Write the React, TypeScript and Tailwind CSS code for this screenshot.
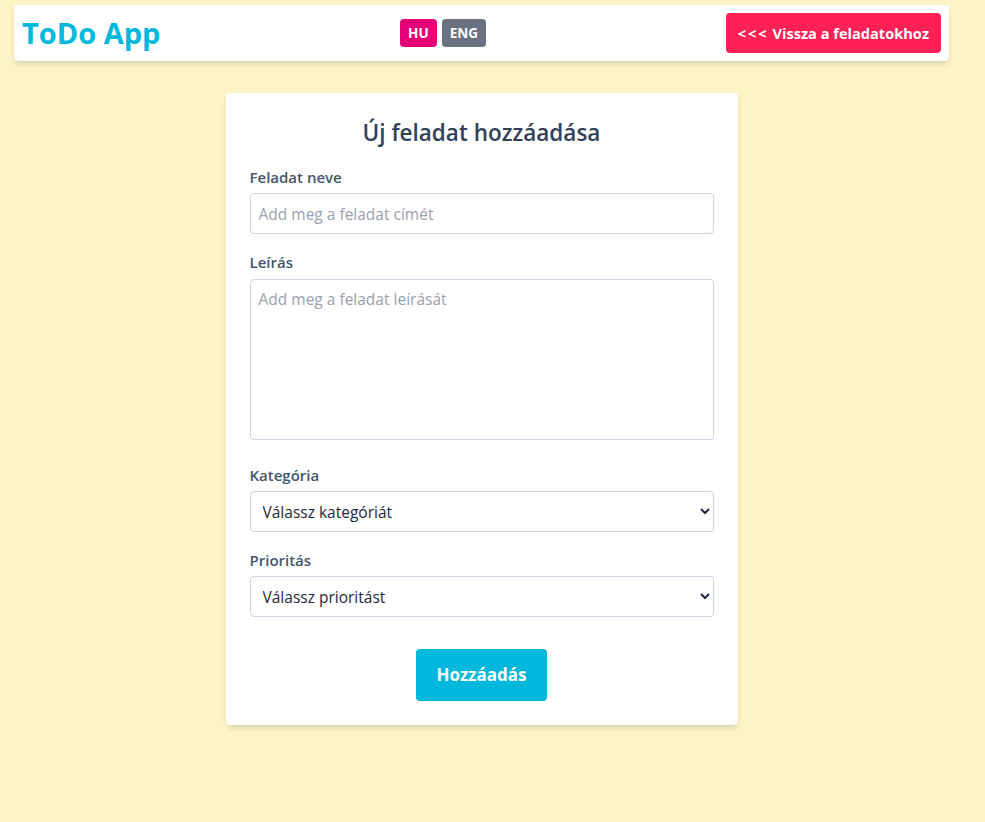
import { useState } from 'react';

export default function App() {
  const [title, setTitle] = useState('');
  const [description, setDescription] = useState('');
  const [category, setCategory] = useState('');
  const [priority, setPriority] = useState('');
  const [lang, setLang] = useState('hu');

  return (
    <div
      className="min-h-screen bg-amber-100 pt-[5px] pr-[22px]"
      style={{ fontFamily: '"Open Sans", "Noto Sans", sans-serif' }}
      data-lang={lang}
    >
      {/* header */}
      <div className="mx-3.5 flex items-center justify-between rounded bg-white px-2 py-2 shadow-md">
        <h1 className="text-[29px] leading-9 font-bold text-cyan-500">ToDo App</h1>
        <div className="flex gap-[5px]">
          <button
            onClick={() => setLang('hu')}
            className="rounded bg-pink-600 px-2 py-1 text-[13.5px] leading-5 font-bold text-white"
          >
            HU
          </button>
          <button
            onClick={() => setLang('eng')}
            className="rounded bg-gray-500 px-2 py-1 text-[13.5px] leading-5 font-bold text-white"
          >
            ENG
          </button>
        </div>
        <a
          href="#"
          onClick={(e) => e.preventDefault()}
          className="rounded bg-rose-500 px-3 py-2 text-[14.6px] leading-6 font-bold text-white hover:bg-rose-600"
        >
          <span className="tracking-[2px]">{'<<<'}</span> Vissza a feladatokhoz
        </a>
      </div>

      {/* form card */}
      <div className="mx-auto mt-8 w-full max-w-lg rounded bg-white p-6 shadow-md">
        <h2 className="mb-4 text-center text-[22.5px] leading-8 font-semibold text-slate-700">
          Új feladat hozzáadása
        </h2>

        <div className="mb-4">
          <label htmlFor="title" className="mb-1 block text-[15px] leading-6 font-semibold text-slate-600">
            Feladat neve
          </label>
          <input
            id="title"
            type="text"
            value={title}
            onChange={(e) => setTitle(e.target.value)}
            placeholder="Add meg a feladat címét"
            className="block h-[41px] w-full rounded border border-slate-300 px-2 text-[15.5px] text-slate-800 placeholder:text-gray-400"
          />
        </div>

        <div className="mb-[23px]">
          <label htmlFor="desc" className="mb-[5px] block text-[15px] leading-6 font-semibold text-slate-600">
            Leírás
          </label>
          <textarea
            id="desc"
            value={description}
            onChange={(e) => setDescription(e.target.value)}
            placeholder="Add meg a feladat leírását"
            className="block h-[161px] w-full resize-none rounded border border-slate-300 p-2 text-[15.5px] text-slate-800 placeholder:text-gray-400"
          />
        </div>

        <div className="mb-4">
          <label htmlFor="category" className="mb-1 block text-[15px] leading-6 font-semibold text-slate-600">
            Kategória
          </label>
          <select
            id="category"
            value={category}
            onChange={(e) => setCategory(e.target.value)}
            className="block h-[41px] w-full rounded border border-slate-300 bg-white px-2 text-[15.5px] text-slate-800"
          >
            <option value="">Válassz kategóriát</option>
            <option value="work">Munka</option>
            <option value="home">Otthon</option>
            <option value="other">Egyéb</option>
          </select>
        </div>

        <div>
          <label htmlFor="priority" className="mb-1 block text-[15px] leading-6 font-semibold text-slate-600">
            Prioritás
          </label>
          <select
            id="priority"
            value={priority}
            onChange={(e) => setPriority(e.target.value)}
            className="block h-[41px] w-full rounded border border-slate-300 bg-white px-2 text-[15.5px] text-slate-800"
          >
            <option value="">Válassz prioritást</option>
            <option value="low">Alacsony</option>
            <option value="medium">Közepes</option>
            <option value="high">Magas</option>
          </select>
        </div>

        <div className="flex justify-center pt-8">
          <button className="rounded bg-cyan-500 px-5 py-3 text-[17px] leading-7 font-bold text-white hover:bg-cyan-600">
            Hozzáadás
          </button>
        </div>
      </div>
    </div>
  );
}
